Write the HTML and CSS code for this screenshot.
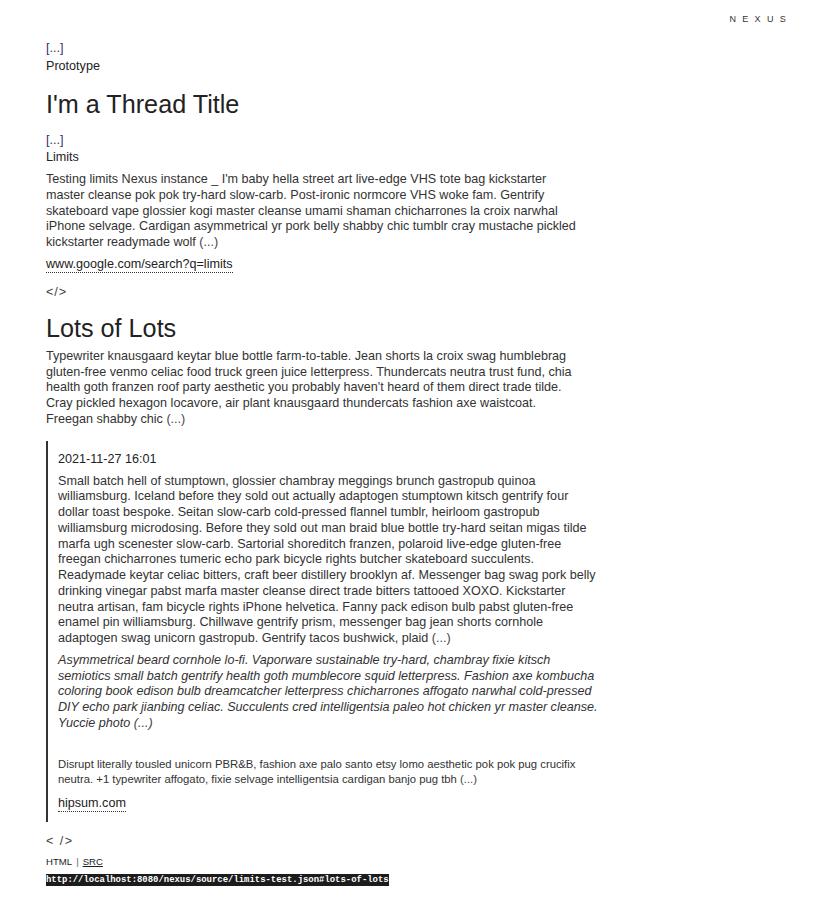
FILE: index.html
```html
<!DOCTYPE html>
<html>
<head>
<meta charset="utf-8">
<link rel="stylesheet" href="styles.css">
</head>
<body>
<header class="topbar"><span class="brand">NEXUS</span></header>
<main class="page">
  <nav class="crumbs">
    <a class="crumb-more" href="#">[...]</a>
    <div class="crumb-name">Prototype</div>
  </nav>
  <h1 class="title">I'm a Thread Title</h1>
  <nav class="crumbs crumbs-2">
    <a class="crumb-more" href="#">[...]</a>
    <div class="crumb-name">Limits</div>
  </nav>
  <p class="text">Testing limits Nexus instance _ I'm baby hella street art live-edge VHS tote bag kickstarter master cleanse pok pok try-hard slow-carb. Post-ironic normcore VHS woke fam. Gentrify skateboard vape glossier kogi master cleanse umami shaman chicharrones la croix narwhal iPhone selvage. Cardigan asymmetrical yr pork belly shabby chic tumblr cray mustache pickled kickstarter readymade wolf <span class="more">(...)</span></p>
  <a class="ext" href="#">www.google.com/search?q=limits</a>
  <div class="code-tag">&lt;/&gt;</div>

  <h1 class="title title-2">Lots of Lots</h1>
  <p class="text">Typewriter knausgaard keytar blue bottle farm-to-table. Jean shorts la croix swag humblebrag gluten-free venmo celiac food truck green juice letterpress. Thundercats neutra trust fund, chia health goth franzen roof party aesthetic you probably haven't heard of them direct trade tilde. Cray pickled hexagon locavore, air plant knausgaard thundercats fashion axe waistcoat. Freegan shabby chic <span class="more">(...)</span></p>

  <section class="entry">
    <div class="date">2021-11-27 16:01</div>
    <p class="text entry-text">Small batch hell of stumptown, glossier chambray meggings brunch gastropub quinoa williamsburg. Iceland before they sold out actually adaptogen stumptown kitsch gentrify four dollar toast bespoke. Seitan slow-carb cold-pressed flannel tumblr, heirloom gastropub williamsburg microdosing. Before they sold out man braid blue bottle try-hard seitan migas tilde marfa ugh scenester slow-carb. Sartorial shoreditch franzen, polaroid live-edge gluten-free freegan chicharrones tumeric echo park bicycle rights butcher skateboard succulents. Readymade keytar celiac bitters, craft beer distillery brooklyn af. Messenger bag swag pork belly drinking vinegar pabst marfa master cleanse direct trade bitters tattooed XOXO. Kickstarter neutra artisan, fam bicycle rights iPhone helvetica. Fanny pack edison bulb pabst gluten-free enamel pin williamsburg. Chillwave gentrify prism, messenger bag jean shorts cornhole adaptogen swag unicorn gastropub. Gentrify tacos bushwick, plaid <span class="more">(...)</span></p>
    <p class="text entry-text italic">Asymmetrical beard cornhole lo-fi. Vaporware sustainable try-hard, chambray fixie kitsch semiotics small batch gentrify health goth mumblecore squid letterpress. Fashion axe kombucha coloring book edison bulb dreamcatcher letterpress chicharrones affogato narwhal cold-pressed DIY echo park jianbing celiac. Succulents cred intelligentsia paleo hot chicken yr master cleanse. Yuccie photo <span class="more">(...)</span></p>
    <p class="small">Disrupt literally tousled unicorn PBR&amp;B, fashion axe palo santo etsy lomo aesthetic pok pok pug crucifix neutra. +1 typewriter affogato, fixie selvage intelligentsia cardigan banjo pug tbh <span class="more">(...)</span></p>
    <a class="ext ext-2" href="#">hipsum.com</a>
  </section>

  <div class="code-tag code-tag-2">&lt; /&gt;</div>
  <div class="formats"><span>HTML</span><span class="sep">|</span><a href="#" class="src">SRC</a></div>
  <div class="url-row"><code class="url">http://localhost:8080/nexus/source/limits-test.json#lots-of-lots</code></div>
</main>
</body>
</html>
```

FILE: styles.css
```css
* { box-sizing: border-box; }
html, body { margin: 0; padding: 0; background: #fff; }
body {
  font-family: "Liberation Sans", Arial, sans-serif;
  color: #333;
  font-size: 12.6px;
  line-height: 15.75px;
}
a { color: inherit; text-decoration: none; }

.topbar {
  display: flex;
  justify-content: flex-end;
  padding: 13px 32px 0 0;
  height: 39px;
}
.brand {
  font-size: 9px;
  line-height: 12px;
  letter-spacing: 6.3px;
  color: #333;
}

.page {
  padding-left: 46px;
  width: 620px;
}

.crumbs { display: flex; flex-direction: column; }
.crumb-more { color: #3b2a6b; line-height: 18px; }
.crumb-name { color: #222; line-height: 18px; }
.crumbs-2 .crumb-name { line-height: 17px; }

.title {
  font-size: 25.2px;
  font-weight: normal;
  line-height: 30px;
  color: #222;
  margin: 14px 0 12px;
}
.title-2 { margin: 13px 0 0; }

.text {
  margin: 6px 0 0;
  max-width: 535px;
}
.title-2 + .text { margin-top: 6px; }
.more { color: #444; }

.ext {
  display: block;
  width: fit-content;
  margin-top: 6px;
  line-height: 15px;
  border-bottom: 1px dotted #333;
  color: #222;
}
.code-tag {
  margin-top: 11px;
  font-size: 12.6px;
  line-height: 16px;
  letter-spacing: 1px;
  color: #444;
}

.entry {
  margin-top: 13px;
  border-left: 2px solid #333;
  padding: 10px 0 10px 10px;
  width: 553px;
}
.date { line-height: 16px; color: #222; }
.entry-text { max-width: none; margin-top: 7px; }
.italic { font-style: italic; margin-top: 6px; }
.small {
  font-size: 11.3px;
  line-height: 15px;
  margin: 25px 0 0;
  color: #333;
}
.ext-2 { margin-top: 9px; }

.code-tag-2 { margin-top: 11px; letter-spacing: 1.5px; }
.formats {
  margin-top: 7px;
  font-size: 9.6px;
  line-height: 12px;
  display: flex;
  gap: 4px;
  color: #222;
}
.sep { color: #666; }
.src { text-decoration: underline; }
.url-row { margin-top: 6px; display: flex; }
.url {
  font-family: "Liberation Mono", "DejaVu Sans Mono", monospace;
  font-size: 8.93px;
  font-weight: bold;
  line-height: 12px;
  background: #1c1c1c;
  color: #fff;
}
```
